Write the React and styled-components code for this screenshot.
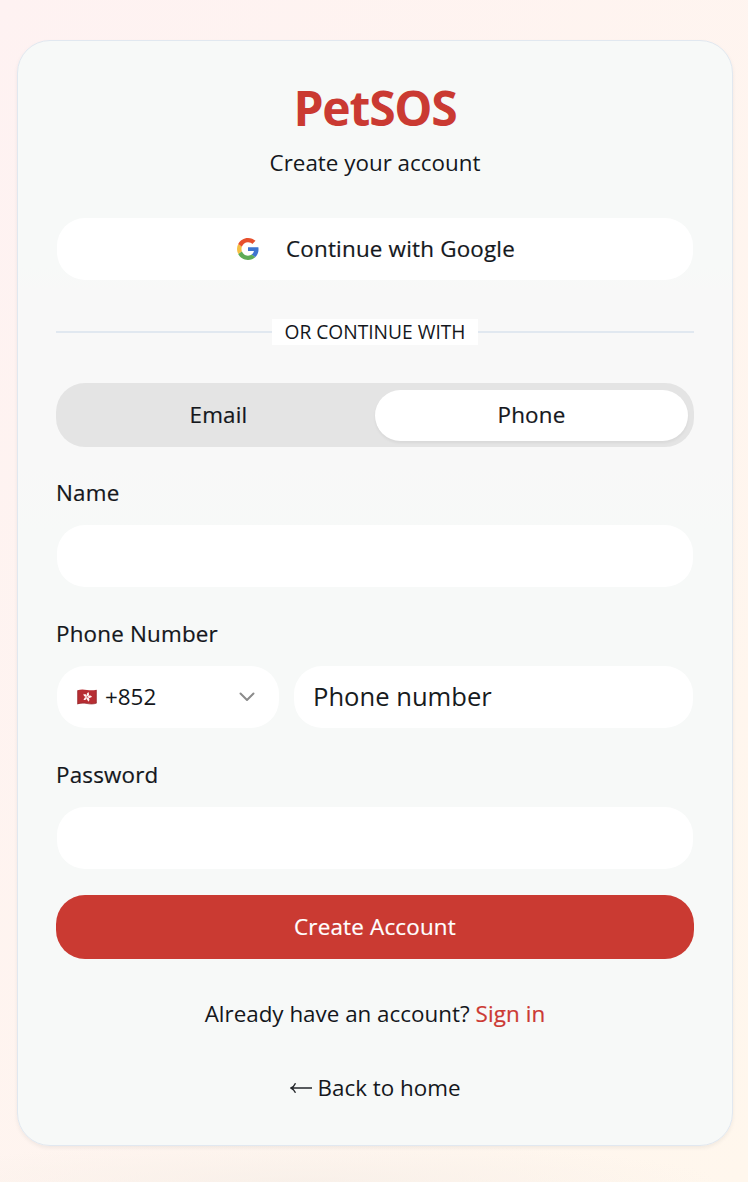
import React from "react";
import styled, { createGlobalStyle, css } from "styled-components";

const GlobalStyle = createGlobalStyle`
  *, *::before, *::after { box-sizing: border-box; }
  body {
    margin: 0;
    font-family: "Open Sans", "Noto Sans", sans-serif;
    font-size: 22.4px;
    color: #14171c;
    background: #fef4ef;
  }
  button, input { font: inherit; color: inherit; }
`;

const mediumText = css`
  font-weight: 500;
  letter-spacing: 0.2px;
  -webkit-text-stroke: 0.2px currentColor;
`;

const Page = styled.main`
  height: 1182px;
  padding: 40px 15px 0 17px;
  overflow: hidden;
  background:
    radial-gradient(ellipse 420px 40px at 300px 100%, rgba(247, 239, 232, 0.8), rgba(247, 239, 232, 0)),
    linear-gradient(to bottom right, #fef2f2, #fff7ed);
`;

const Card = styled.section`
  height: 1106px;
  padding: 43px 38px 0;
  display: flex;
  flex-direction: column;
  border: 1px solid #e1e8f0;
  border-radius: 33px;
  background: linear-gradient(#f7f9f8 225px, #f8f8f8 250px, #f8f8f8 425px, #f7f9f8 490px);
  box-shadow: 0 2px 4px rgba(0, 0, 0, 0.06);
`;

const Title = styled.h1`
  margin: 0;
  line-height: 48px;
  font-size: 48px;
  font-weight: 700;
  letter-spacing: -1.2px;
  text-align: center;
  color: #ca3a32;
`;

const Subtitle = styled.p`
  margin: 15px 0 0;
  line-height: 32px;
  text-align: center;
`;

const GoogleButton = styled.button`
  height: 62px;
  margin: 39px 1px 0;
  padding: 0 0 0 2px;
  display: flex;
  align-items: center;
  justify-content: center;
  gap: 27px;
  border: 0;
  border-radius: 28px;
  background: #fff;
  ${mediumText}
`;

const GoogleLabel = styled.span`
  padding-bottom: 2px;
`;

const Divider = styled.div`
  height: 26px;
  margin-top: 39px;
  display: flex;
  align-items: center;

  &::before, &::after {
    content: "";
    flex: 1;
    height: 2px;
    background: #e1e8f0;
  }
`;

const DividerLabel = styled.span`
  width: 206px;
  line-height: 26px;
  font-size: 19.2px;
  text-align: center;
  white-space: nowrap;
  background: #fff;
`;

const Tabs = styled.div`
  height: 64px;
  margin-top: 38px;
  padding: 7px 6px 6px;
  display: flex;
  border-radius: 29px;
  background: #e4e4e4;
`;

const Tab = styled.button`
  flex: 1;
  padding: 0 0 2px;
  border: 0;
  border-radius: 26px;
  line-height: 49px;
  background: ${({ $active }) => ($active ? "#fff" : "transparent")};
  box-shadow: ${({ $active }) => ($active ? "0 2px 3px rgba(0, 0, 0, 0.05)" : "none")};
  ${mediumText}
`;

const Form = styled.form`
  margin-top: 30px;
  display: flex;
  flex-direction: column;
  gap: 31px;
`;

const Field = styled.div`
  height: 110px;
  display: flex;
  flex-direction: column;
  justify-content: space-between;
`;

const Label = styled.label`
  line-height: 32px;
  ${mediumText}
`;

const Input = styled.input`
  flex: 1;
  min-width: 0;
  height: 62px;
  padding: 0 19px 2px;
  border: 0;
  border-radius: 28px;
  background: #fff;
  font-size: 25.6px;
  outline: none;

  &::placeholder { color: #171b20; opacity: 1; }
`;

const InputRow = styled.div`
  height: 62px;
  margin: 0 1px;
  display: flex;
  gap: 15px;
`;

const CountrySelect = styled.button`
  width: 222px;
  height: 62px;
  padding: 0 24px 0 20px;
  display: flex;
  align-items: center;
  border: 0;
  border-radius: 28px;
  background: #fff;
`;

const DialCode = styled.span`
  margin-left: 8px;
  padding-bottom: 2px;
  flex: 1;
  text-align: left;
`;

const SubmitButton = styled.button`
  height: 64px;
  margin-top: -5px;
  padding: 0 0 2px;
  border: 0;
  border-radius: 29px;
  color: #fff;
  background: #ca3a32;
  ${mediumText}
`;

const FooterText = styled.p`
  margin: ${({ $gap }) => $gap}px 0 0;
  line-height: 32px;
  display: flex;
  justify-content: center;
  align-items: center;
  gap: 6px;
`;

const SignInLink = styled.a`
  color: #cc3a33;
  ${mediumText}
  letter-spacing: 0.1px;
`;

const GoogleIcon = () => (
  <svg width="22" height="22" viewBox="0 0 24 24">
    <path fill="#3f74cf" d="M23.5 12.3c0-.9-.1-1.5-.2-2.2H12v4.2h6.5c-.2 1.1-.9 2.7-2.6 3.8l3.9 3c2.3-2.1 3.7-5.2 3.7-8.8z" />
    <path fill="#5dab55" d="M12 24c3.3 0 6-1.1 7.9-2.9l-3.9-3c-1 .7-2.4 1.2-4 1.2-3.1 0-5.7-2-6.7-4.9l-4 3.1C3.3 21.4 7.3 24 12 24z" />
    <path fill="#f5bf42" d="M5.3 14.4c-.3-.8-.4-1.6-.4-2.4s.2-1.7.4-2.4l-4-3.1C.5 8.2 0 10 0 12s.5 3.8 1.3 5.5z" />
    <path fill="#e7502d" d="M12 4.7c2.3 0 3.8 1 4.7 1.8l3.5-3.4C18 1.2 15.3 0 12 0 7.3 0 3.3 2.7 1.3 6.500l4 3.100C6.300 6.700 8.900 4.700 12 4.700z" />
  </svg>
);

const FlagIcon = () => (
  <svg width="20" height="16" viewBox="0 0 21 16" preserveAspectRatio="none">
    <path fill="#b72d32" d="M.5 1.2C4 .1 7 .3 10.500 .9s6.500.6 10-.1v13.500c-3.500 1-6.500.8-10 .3S4 14.200 .5 15.200z" />
    <path fill="none" stroke="#8f292d" strokeWidth=".7" d="M.8 1.500v13.300M20.200 1v13M.5 14.900c3.500-1.200 6.500-1.100 10-.4s6.500.8 10-.4" />
    <g fill="#fff5f3" transform="translate(10.800 7.900) rotate(12)">
      {[0, 72, 144, 216, 288].map((angle) => (
        <path key={angle} transform={`rotate(${angle})`} d="M0-.5C-1.600-1.700-1.500-4.200.7-4.900c-.3 1.200 1.100 1.900.5 3.200Q.9-.8 0-.5z" />
      ))}
    </g>
  </svg>
);

const ChevronIcon = () => (
  <svg width="16" height="10" viewBox="0 0 16 10" fill="none" stroke="#8b8b8b" strokeWidth="2" strokeLinecap="round" strokeLinejoin="round">
    <path d="M1.500 1.500 8 8l6.500-6.500" />
  </svg>
);

const ArrowIcon = () => (
  <svg width="22" height="12" viewBox="0 0 22 12" fill="none" stroke="#24272b" strokeWidth="1.400">
    <path d="M22 6H1M5.500 1.200C4.500 3.500 3 5 1 6c2 1 3.500 2.500 4.500 4.800" />
  </svg>
);

export default function App() {
  return (
    <>
      <GlobalStyle />
      <Page>
        <Card>
          <Title>PetSOS</Title>
          <Subtitle>Create your account</Subtitle>
          <GoogleButton type="button">
            <GoogleIcon />
            <GoogleLabel>Continue with Google</GoogleLabel>
          </GoogleButton>
          <Divider>
            <DividerLabel>OR CONTINUE WITH</DividerLabel>
          </Divider>
          <Tabs>
            <Tab type="button">Email</Tab>
            <Tab type="button" $active>Phone</Tab>
          </Tabs>
          <Form>
            <Field>
              <Label htmlFor="name">Name</Label>
              <InputRow>
                <Input id="name" />
              </InputRow>
            </Field>
            <Field>
              <Label htmlFor="phone">Phone Number</Label>
              <InputRow>
                <CountrySelect type="button">
                  <FlagIcon />
                  <DialCode>+852</DialCode>
                  <ChevronIcon />
                </CountrySelect>
                <Input id="phone" type="tel" placeholder="Phone number" />
              </InputRow>
            </Field>
            <Field>
              <Label htmlFor="password">Password</Label>
              <InputRow>
                <Input id="password" type="password" />
              </InputRow>
            </Field>
            <SubmitButton type="button">Create Account</SubmitButton>
          </Form>
          <FooterText $gap={39}>
            <span>Already have an account?</span>
            <SignInLink>Sign in</SignInLink>
          </FooterText>
          <FooterText $gap={42}>
            <ArrowIcon />
            <span>Back to home</span>
          </FooterText>
        </Card>
      </Page>
    </>
  );
}
